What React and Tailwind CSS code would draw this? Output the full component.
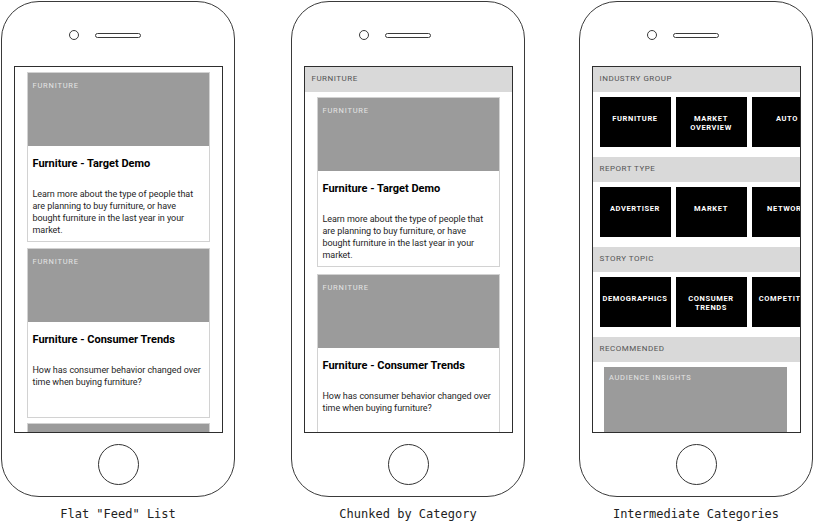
import React from "react";

const ui = { fontFamily: "Roboto, 'Noto Sans', sans-serif" };
const mono = { fontFamily: "'DejaVu Sans Mono', 'Liberation Mono', monospace" };

function Phone({ children, label }) {
  return (
    <div className="flex flex-col items-center w-[234px]">
      <div className="w-[234px] h-[496px] border-[1.5px] border-[#3a3a3a] rounded-[38px] flex flex-col bg-white">
        <div className="h-[63.5px] pt-[28px] flex justify-center items-start">
          <div className="flex items-center h-[10px]">
            <div className="w-[10px] h-[10px] rounded-full border-[1.5px] border-[#3a3a3a]" />
            <div className="w-[16px]" />
            <div className="w-[46px] h-[5px] rounded-full border-[1.5px] border-[#3a3a3a]" />
            <div className="w-[26px]" />
          </div>
        </div>
        <div className="mx-[11.5px] h-[367px] border-[1.5px] border-[#2e2e2e] overflow-hidden bg-white">
          {children}
        </div>
        <div className="flex-1 flex items-center justify-center">
          <div className="w-[41px] h-[41px] rounded-full border-[1.5px] border-[#333]" />
        </div>
      </div>
      <div className="mt-[9px] h-[16px] leading-[16px] text-[12px] text-[#222] whitespace-pre" style={mono}>
        {label}
      </div>
    </div>
  );
}

function Card({ title, lines }) {
  return (
    <div className="w-[183px] mx-auto border border-[#d2d2d2] flex flex-col bg-white">
      <div className="h-[73px] bg-[#9b9b9b] px-[5px] pt-[8px]">
        <div className="text-[7.5px] leading-[10px] tracking-[0.8px] text-[#e4e4e4]">FURNITURE</div>
      </div>
      <div className="h-[95px] px-[5px] pt-[11px]">
        <div className="text-[11px] leading-[14px] font-bold text-black whitespace-nowrap">{title}</div>
        <div className="mt-[17px] text-[9px] leading-[12px] text-[#1e1e1e] tracking-[-0.05px]">
          {lines.map((l, i) => (
            <div key={i} className="whitespace-nowrap">{l}</div>
          ))}
        </div>
      </div>
    </div>
  );
}

const card1 = {
  title: "Furniture - Target Demo",
  lines: [
    "Learn more about the type of people that",
    "are planning to buy furniture, or have",
    "bought furniture in the last year in your",
    "market.",
  ],
};
const card2 = {
  title: "Furniture - Consumer Trends",
  lines: ["How has consumer behavior changed over", "time when buying furniture?"],
};

function SectionHeader({ children }) {
  return (
    <div className="h-[25px] bg-[#d9d9d9] px-[7px] flex items-center text-[8px] tracking-[0.5px] text-[#555]">
      {children}
    </div>
  );
}

function Tile({ children }) {
  return (
    <div className="w-[71px] h-[50px] shrink-0 bg-black flex justify-center text-center pt-[17px] text-white font-bold text-[7.5px] leading-[9px] tracking-[0.6px] whitespace-nowrap">
      {children}
    </div>
  );
}

function TileRow({ items }) {
  return (
    <div className="flex gap-[5px] pl-[7px] mt-[5px] mb-[10px]">
      {items.map((t, i) => (
        <Tile key={i}>{t}</Tile>
      ))}
    </div>
  );
}

export default function App() {
  return (
    <div className="w-[815px] h-[523px] bg-white overflow-hidden" style={ui}>
      <div className="flex pt-[1px] pl-[1px]">
        <Phone label={'Flat "Feed" List'}>
          <div className="pt-[5.5px] flex flex-col gap-[5.5px]">
            <Card {...card1} />
            <Card {...card2} />
            <Card {...card2} />
          </div>
        </Phone>
        <div className="ml-[56px]">
          <Phone label="Chunked by Category">
            <SectionHeader>FURNITURE</SectionHeader>
            <div className="pt-[5.5px] flex flex-col gap-[6.5px]">
              <Card {...card1} />
              <Card {...card2} />
            </div>
          </Phone>
        </div>
        <div className="ml-[54px]">
          <Phone label="Intermediate Categories">
            <SectionHeader>INDUSTRY GROUP</SectionHeader>
            <TileRow
              items={[
                "FURNITURE",
                <span key="m">
                  MARKET
                  <br />
                  OVERVIEW
                </span>,
                "AUTO",
              ]}
            />
            <SectionHeader>REPORT TYPE</SectionHeader>
            <TileRow items={["ADVERTISER", "MARKET", "NETWORK"]} />
            <SectionHeader>STORY TOPIC</SectionHeader>
            <TileRow
              items={[
                "DEMOGRAPHICS",
                <span key="c">
                  CONSUMER
                  <br />
                  TRENDS
                </span>,
                "COMPETITION",
              ]}
            />
            <SectionHeader>RECOMMENDED</SectionHeader>
            <div className="pt-[5.5px] pl-[11.5px]">
              <div className="w-[183px] h-[100px] bg-[#9b9b9b] px-[5px] pt-[6px]">
                <div className="text-[7.5px] leading-[10px] tracking-[0.7px] text-[#e4e4e4]">AUDIENCE INSIGHTS</div>
              </div>
            </div>
          </Phone>
        </div>
      </div>
    </div>
  );
}
